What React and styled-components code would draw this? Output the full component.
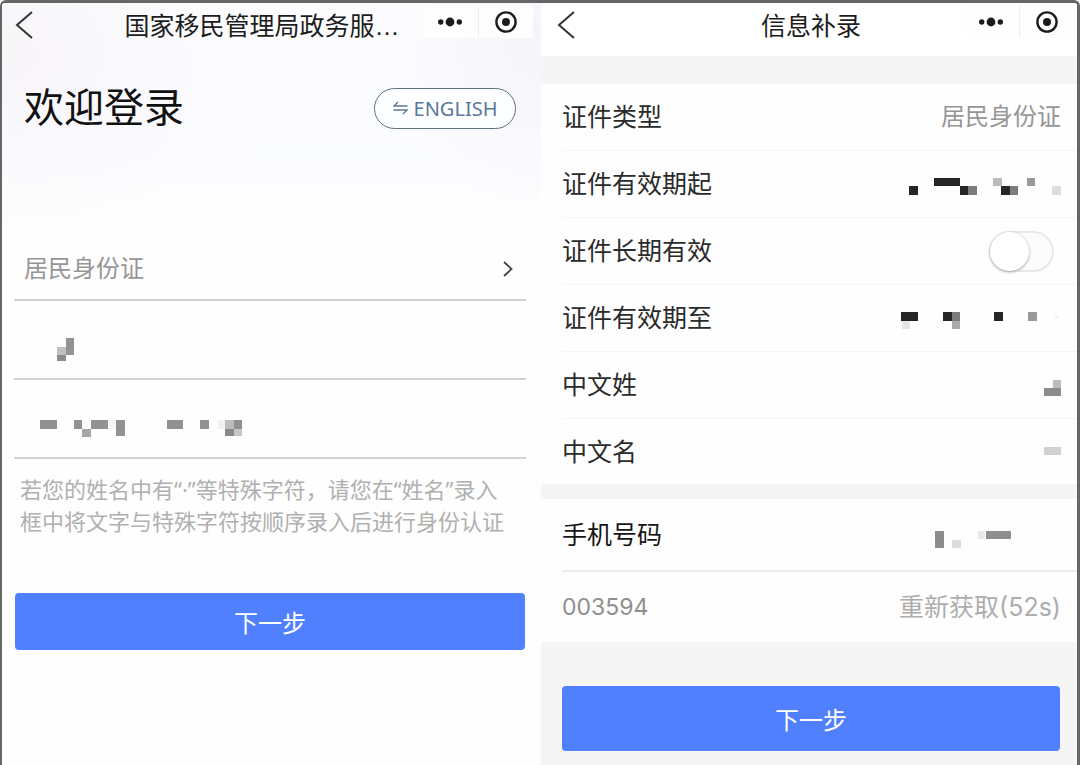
import React from 'react';
import styled, { createGlobalStyle } from 'styled-components';

const GlobalStyle = createGlobalStyle`
  *, *::before, *::after { box-sizing: border-box; }
  body {
    margin: 0;
    background: #ffffff;
    color: #2b2b2b;
    font-family: "Liberation Sans", "Noto Sans CJK SC", sans-serif;
    font-size: 25px;
  }
  button, input, select { font: inherit; color: inherit; }
  h1, h2, p { margin: 0; font-weight: 400; }
  svg { display: block; flex: none; }
`;

const Frame = styled.div`
  display: grid;
  grid-template-columns: minmax(0, 539fr) minmax(0, 536fr);
  min-height: 100vh;
  overflow: hidden;
  border: solid #666666;
  border-width: 3px 3px 0 2px;
  border-radius: 6px 6px 0 0;
`;

const Screen = styled.main`
  display: flex;
  flex-direction: column;
  background: ${(p) => (p.$grey ? '#f5f5f5' : '#fefefe')};
`;

const LoginScreen = styled(Screen)`
  background:
    radial-gradient(ellipse 240px 190px at 0 50px, #f8f5f9, transparent),
    radial-gradient(ellipse 150px 180px at 100% 30px, #f5f4fb, transparent),
    linear-gradient(#fcfcfe, #fbfcff 150px, #fefefe 230px);
`;

const NavBar = styled.header`
  display: grid;
  grid-template-columns: ${(p) => (p.$solid ? 103 : 88)}px minmax(0, 1fr) 110px;
  align-items: start;
  height: 53px;
  padding: ${(p) => (p.$solid ? '2px 3px 0 14px' : '2px 8px 0 11px')};
  background: ${(p) => (p.$solid ? '#ffffff' : 'transparent')};
`;

const BackButton = styled.button`
  width: 24px;
  height: 40px;
  padding: 0;
  border: 0;
  background: none;
`;

const NavTitle = styled.h1`
  padding-top: 2px;
  font-size: 25px;
  line-height: 38px;
  color: #1c1c1c;
  text-align: center;
  white-space: nowrap;
`;

const Capsule = styled.div`
  display: flex;
  align-items: center;
  height: 33px;
  border-radius: 4px;
  background: #fefeff;
`;

const CapsuleButton = styled.button`
  display: flex;
  flex: 1;
  align-items: center;
  justify-content: center;
  height: 32px;
  padding: 0;
  border: 0;
  background: none;

  & + & { border-left: 1px solid #eeeeee; }
`;

const Welcome = styled.section`
  display: flex;
  align-items: center;
  justify-content: space-between;
  margin-top: 22px;
  padding: 0 25px 0 22px;
`;

const WelcomeTitle = styled.h2`
  font-size: 40px;
  line-height: 60px;
  color: #111111;
`;

const LanguageButton = styled.button`
  display: flex;
  align-items: center;
  justify-content: center;
  gap: 6px;
  width: 142px;
  height: 41px;
  padding: 0;
  border: 1px solid #5c727c;
  border-radius: 21px;
  background: #fcfeff;
  color: #5a7898;
  font-family: "Noto Sans", sans-serif;
  font-size: 20px;
`;

const LoginForm = styled.form`
  display: flex;
  flex-direction: column;
  margin-top: 100px;
  padding: 0 15px 0 12px;
`;

const Field = styled.label`
  display: flex;
  align-items: center;
  height: ${(p) => (p.$first ? 63 : 79)}px;
  padding: 0 12px 0 10px;
  border-bottom: 2px solid #d2d2d2;
  color: #969696;
`;

const FieldSelect = styled.select`
  flex: 1;
  min-width: 0;
  padding: 0;
  border: 0;
  appearance: none;
  background: none;
  font-size: 24px;
  line-height: 36px;
`;

const FieldInput = styled.input`
  flex: 1;
  min-width: 0;
  padding: 0;
  border: 0;
  outline: 0;
  background: none;
`;

const Hint = styled.p`
  margin: 14px 0 0 6px;
  font-family: "Noto Sans", "Noto Sans CJK SC", sans-serif;
  font-size: 22px;
  line-height: 32px;
  color: #b0b0b0;
  white-space: nowrap;
`;

const PrimaryButton = styled.button`
  height: ${(p) => (p.$tall ? 65 : 57)}px;
  padding: 0;
  border: 0;
  border-radius: 4px;
  background: #5180ff;
  color: #ffffff;
  font-size: 24px;
`;

const LoginSubmit = styled(PrimaryButton)`
  margin: 56px 1px 0;
`;

const InfoForm = styled.form`
  display: flex;
  flex-direction: column;
`;

const Group = styled.div`
  margin-top: ${(p) => p.$gap}px;
  padding-left: 21px;
  background: #fefefe;
`;

const Row = styled.div`
  display: flex;
  align-items: center;
  justify-content: space-between;
  height: ${(p) => (p.$tall ? 73 : 67)}px;
  padding-right: 16px;
  border-bottom: ${(p) => (p.$tall ? 2 : 1)}px solid ${(p) => (p.$tall ? '#ececec' : '#f5f5f5')};

  &:last-child {
    height: ${(p) => (p.$tall ? 70 : 65)}px;
    border-bottom: 0;
  }
`;

const RowLabel = styled.label`
  line-height: 38px;
  color: ${(p) => (p.$strong ? '#161616' : '#2b2b2b')};
`;

const RowValue = styled.span`
  font-size: 24px;
  line-height: 38px;
  color: #969696;
`;

const Switch = styled.input`
  display: flex;
  width: 65px;
  height: 41px;
  margin: 0 7px 0 0;
  border: 2px solid #e8e8e8;
  border-radius: 21px;
  appearance: none;
  background: #fcfcfc;

  &::before {
    content: "";
    width: 39px;
    height: 39px;
    margin: -1px;
    border-radius: 50%;
    background: #ffffff;
    box-shadow: 0 1px 3px #a0a0a0;
  }

  &:checked {
    justify-content: flex-end;
    background: #5180ff;
  }
`;

const CodeInput = styled.input`
  flex: 1;
  min-width: 0;
  padding: 0;
  border: 0;
  outline: 0;
  background: none;
  font-family: Inter, sans-serif;
  font-size: 23px;
  color: #8f8f8f;
`;

const ResendButton = styled.button`
  padding: 0;
  border: 0;
  background: none;
  font-family: Inter, "Noto Sans CJK SC", sans-serif;
  font-size: 25px;
  line-height: 38px;
  color: #adadad;
`;

const InfoSubmit = styled(PrimaryButton)`
  margin: 44px 17px 14px 21px;
`;

const BackIcon = () => (
  <svg width="24" height="40" viewBox="0 0 24 40" fill="none" stroke="#333333" strokeWidth="2">
    <path d="M19 7 L4 20 L19 33" />
  </svg>
);

const MoreIcon = () => (
  <svg width="26" height="12" viewBox="0 0 26 12" fill="#1c1c1c">
    <circle cx="3.7" cy="6" r="2.7" />
    <circle cx="13" cy="6" r="4.4" />
    <circle cx="22.3" cy="6" r="2.7" />
  </svg>
);

const CloseIcon = () => (
  <svg width="24" height="24" viewBox="0 0 24 24">
    <circle cx="12" cy="12" r="9.6" fill="none" stroke="#1c1c1c" strokeWidth="2.4" />
    <circle cx="12" cy="12" r="4" fill="#1c1c1c" />
  </svg>
);

const SwapIcon = () => (
  <svg width="15" height="14" viewBox="0 0 15 14" fill="none" stroke="currentColor" strokeWidth="1.4">
    <path d="M5 1 L1 5 H14.5 M0.5 9 H14 L10 13" />
  </svg>
);

const ChevronIcon = () => (
  <svg width="12" height="18" viewBox="0 0 12 18" fill="none" stroke="#444444" strokeWidth="1.8">
    <path d="M2 2 L9.5 9 L2 16" />
  </svg>
);

// Hidden personal data: each cell is [x, y, width, height, colour].
const MASKS = {
  name: [[0, 9, 9, 8, '#c0c0c0'], [0, 17, 9, 6, '#8c8c8c'], [9, 0, 8, 17, '#939393']],
  id: [
    [0, 0, 17, 9, '#929292'], [34, 0, 8, 9, '#929292'], [42, 9, 9, 8, '#a6a6a6'],
    [51, 0, 17, 9, '#929292'], [69, 0, 7, 9, '#f4f4f4'], [76, 0, 9, 16, '#929292'],
    [127, 0, 16, 9, '#929292'], [160, 0, 9, 9, '#929292'], [178, 0, 7, 9, '#f2f2f2'],
    [185, 0, 9, 9, '#bdbdbd'], [194, 0, 8, 9, '#8f8f8f'], [185, 9, 9, 7, '#8a8a8a'],
    [194, 9, 8, 7, '#c6c6c6'],
  ],
  start: [
    [0, 13, 9, 9, '#262626'], [25, 5, 26, 8, '#262626'], [51, 13, 8, 9, '#262626'],
    [59, 13, 9, 9, '#7c7c7c'], [84, 5, 9, 8, '#bbbbbb'], [92, 13, 9, 9, '#262626'],
    [101, 13, 8, 9, '#7c7c7c'], [118, 5, 8, 8, '#999999'], [143, 13, 9, 9, '#dddddd'],
  ],
  end: [
    [0, 5, 17, 9, '#262626'], [1, 14, 8, 8, '#e6e6e6'], [42, 5, 9, 9, '#262626'],
    [51, 5, 8, 9, '#7c7c7c'], [51, 14, 8, 8, '#aaaaaa'], [93, 5, 9, 9, '#262626'],
    [127, 5, 9, 9, '#999999'], [154, 9, 3, 2, '#eeeeee'],
  ],
  surname: [[9, 6, 8, 8, '#bbbbbb'], [0, 14, 17, 8, '#8c8c8c']],
  given: [[0, 6, 17, 8, '#d0d0d0']],
  phone: [
    [0, 9, 9, 17, '#8c8c8c'], [17, 18, 9, 8, '#dddddd'], [43, 9, 7, 8, '#e8e8e8'],
    [51, 9, 25, 8, '#8f8f8f'],
  ],
};

function Mask({ kind, width, height }) {
  return (
    <svg width={width} height={height} viewBox={`0 0 ${width} ${height}`} shapeRendering="crispEdges" aria-hidden="true">
      {MASKS[kind].map(([x, y, w, h, fill]) => (
        <rect key={`${x}-${y}`} x={x} y={y} width={w} height={h} fill={fill} />
      ))}
    </svg>
  );
}

const MaskedField = styled(Field)`
  padding-top: 20px;
  padding-left: ${(p) => p.$indent}px;
`;

function Navigation({ title, solid }) {
  return (
    <NavBar $solid={solid}>
      <BackButton type="button" aria-label="返回"><BackIcon /></BackButton>
      <NavTitle>{title}</NavTitle>
      <Capsule>
        <CapsuleButton type="button" aria-label="更多"><MoreIcon /></CapsuleButton>
        <CapsuleButton type="button" aria-label="关闭"><CloseIcon /></CapsuleButton>
      </Capsule>
    </NavBar>
  );
}

export default function App() {
  return (
    <>
      <GlobalStyle />
      <Frame>
        <LoginScreen>
          <Navigation title="国家移民管理局政务服…" />
          <Welcome>
            <WelcomeTitle>欢迎登录</WelcomeTitle>
            <LanguageButton type="button"><SwapIcon />ENGLISH</LanguageButton>
          </Welcome>
          <LoginForm>
            <Field $first>
              <FieldSelect aria-label="证件类型" defaultValue="id">
                <option value="id">居民身份证</option>
              </FieldSelect>
              <ChevronIcon />
            </Field>
            <MaskedField $indent={43}>
              <Mask kind="name" width={17} height={23} />
              <FieldInput aria-label="姓名" />
            </MaskedField>
            <MaskedField $indent={26}>
              <Mask kind="id" width={202} height={17} />
              <FieldInput aria-label="证件号码" />
            </MaskedField>
            <Hint>
              若您的姓名中有“·”等特殊字符，请您在“姓名”录入
              <br />
              框中将文字与特殊字符按顺序录入后进行身份认证
            </Hint>
            <LoginSubmit type="button">下一步</LoginSubmit>
          </LoginForm>
        </LoginScreen>

        <Screen $grey>
          <Navigation title="信息补录" solid />
          <InfoForm>
            <Group $gap={28}>
              <Row>
                <RowLabel as="span">证件类型</RowLabel>
                <RowValue>居民身份证</RowValue>
              </Row>
              <Row>
                <RowLabel as="span">证件有效期起</RowLabel>
                <Mask kind="start" width={152} height={22} />
              </Row>
              <Row>
                <RowLabel htmlFor="long-term">证件长期有效</RowLabel>
                <Switch id="long-term" type="checkbox" role="switch" />
              </Row>
              <Row>
                <RowLabel as="span">证件有效期至</RowLabel>
                <Mask kind="end" width={160} height={22} />
              </Row>
              <Row>
                <RowLabel as="span">中文姓</RowLabel>
                <Mask kind="surname" width={17} height={22} />
              </Row>
              <Row>
                <RowLabel as="span">中文名</RowLabel>
                <Mask kind="given" width={17} height={22} />
              </Row>
            </Group>
            <Group $gap={15}>
              <Row $tall>
                <RowLabel as="span" $strong>手机号码</RowLabel>
                <Mask kind="phone" width={126} height={26} />
              </Row>
              <Row $tall>
                <CodeInput aria-label="验证码" defaultValue="003594" />
                <ResendButton type="button">重新获取(52s)</ResendButton>
              </Row>
            </Group>
            <InfoSubmit type="button" $tall>下一步</InfoSubmit>
          </InfoForm>
        </Screen>
      </Frame>
    </>
  );
}
